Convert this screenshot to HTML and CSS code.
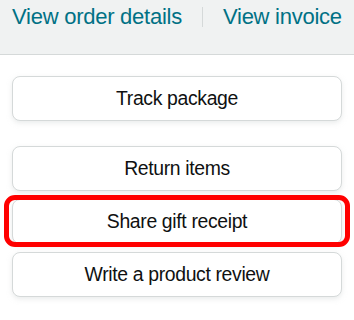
FILE: index.html
```html
<!DOCTYPE html>
<html>
<head>
<meta charset="utf-8">
<link rel="stylesheet" href="styles.css">
</head>
<body>
<div class="header">
  <div class="links">
    <a class="link">View order details</a>
    <span class="sep"></span>
    <a class="link">View invoice</a>
  </div>
</div>
<div class="section first">
  <div class="btn">Track package</div>
</div>
<div class="section second">
  <div class="btn">Return items</div>
  <div class="highlight">
    <div class="btn">Share gift receipt</div>
  </div>
  <div class="btn">Write a product review</div>
</div>
</body>
</html>
```
FILE: styles.css
```css
html, body {
  margin: 0;
  padding: 0;
  background: #ffffff;
}
body {
  font-family: "Liberation Sans", Arial, sans-serif;
  color: #0f1111;
  width: 354px;
  height: 320px;
  overflow: hidden;
}
.header {
  box-sizing: border-box;
  height: 55px;
  background: #f0f2f2;
  border-bottom: 1px solid #d5d9d9;
  padding: 4px 12px 0 12px;
}
.links {
  display: flex;
  align-items: center;
  height: 26px;
}
.link {
  font-size: 22px;
  letter-spacing: -0.25px;
  line-height: 26px;
  color: #007185;
  white-space: nowrap;
}
.sep {
  display: block;
  width: 1px;
  height: 20px;
  background: #d5d9d9;
  margin: 0 20px;
}
.section {
  padding: 0 12px;
  display: flex;
  flex-direction: column;
  gap: 8px;
}
.first {
  padding-top: 21px;
}
.second {
  padding-top: 25px;
}
.btn {
  box-sizing: border-box;
  height: 45px;
  border: 1px solid #d5d9d9;
  border-radius: 8px;
  background: #ffffff;
  box-shadow: 0 2px 5px 0 rgba(213, 217, 217, 0.5);
  display: flex;
  align-items: center;
  justify-content: center;
  font-size: 19.4px;
  letter-spacing: -0.35px;
  color: #0f1111;
}
.highlight {
  position: relative;
}
.highlight::after {
  content: "";
  position: absolute;
  left: -8px;
  right: -8px;
  top: -4px;
  bottom: -3px;
  border: 5px solid #ff0000;
  border-radius: 11px;
  pointer-events: none;
}
```
